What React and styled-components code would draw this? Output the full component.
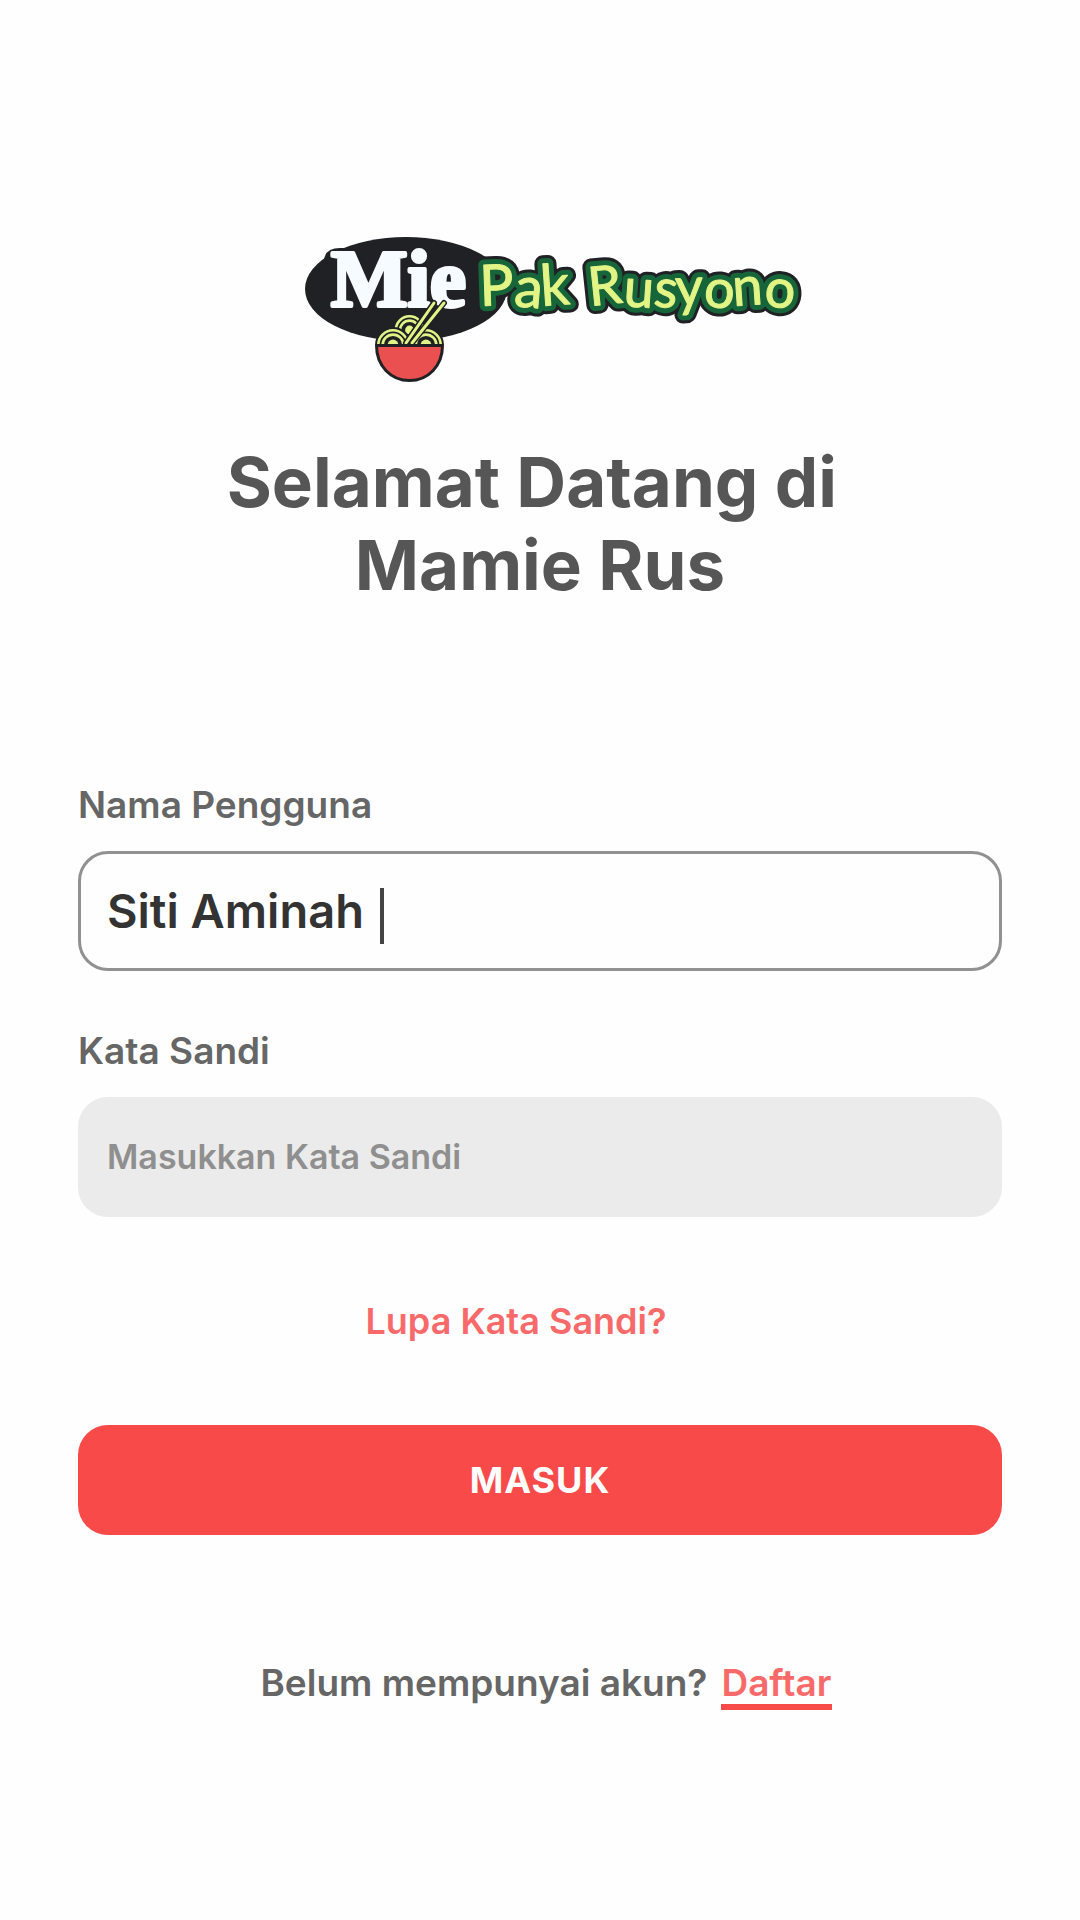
import React from "react";
import styled, { createGlobalStyle } from "styled-components";

const GlobalStyle = createGlobalStyle`
  *, *::before, *::after { box-sizing: border-box; }
  body {
    margin: 0;
    background: #fefefe;
    font-family: Inter, "Open Sans", sans-serif;
  }
`;

const Page = styled.main`
  display: flex;
  flex-direction: column;
  align-items: stretch;
  min-height: 100vh;
  padding: 237px 78px 120px;
`;

const LogoArt = styled.svg`
  display: block;
  align-self: center;
  width: 508px;
  max-width: 100%;
  overflow: visible;
`;

const Title = styled.h1`
  margin: 58px 0 0;
  color: #565656;
  font-size: 69px;
  font-weight: 700;
  line-height: 83px;
  text-align: center;
`;

const Form = styled.form`
  display: flex;
  flex-direction: column;
  margin-top: 178px;
`;

const Field = styled.div`
  display: flex;
  flex-direction: column;
  gap: 26px;
  & + & { margin-top: 60px; }
`;

const Label = styled.label`
  color: #666;
  font-size: 37px;
  font-weight: 600;
  line-height: 40px;
`;

const InputBox = styled.div`
  display: flex;
  align-items: center;
  gap: 16px;
  height: 120px;
  padding: 0 26px;
  border: 3px solid ${(p) => (p.$active ? "#919191" : "#ebebeb")};
  border-radius: 30px;
  background: ${(p) => (p.$active ? "#fefefe" : "#ebebeb")};
`;

const Input = styled.input`
  ${(p) => (p.$hug ? "field-sizing: content; max-width: 100%;" : "flex: 1;")}
  min-width: 0;
  padding: 0;
  border: 0;
  outline: 0;
  background: transparent;
  color: #333;
  caret-color: transparent;
  font-family: Inter, "Open Sans", sans-serif;
  font-size: ${(p) => (p.$hug ? 47 : 34)}px;
  font-weight: 600;
  line-height: 56px;
  &::placeholder {
    color: #8f8f8f;
    opacity: 1;
  }
`;

const Caret = styled.span`
  flex: none;
  width: 4px;
  height: 56px;
  margin-top: 10px;
  background: #444;
`;

const ForgotRow = styled.div`
  display: flex;
  justify-content: center;
  margin: 84px 0;
  padding-right: 48px;
`;

const TextLink = styled.a`
  color: #f86a6a;
  font-size: 36px;
  font-weight: 600;
  line-height: 40px;
  text-decoration: none;
`;

const SignUpLink = styled(TextLink)`
  padding-bottom: 1px;
  border-bottom: 6px solid #f94a4a;
  font-size: 37px;
`;

const SubmitButton = styled.button`
  height: 110px;
  border: 0;
  border-radius: 30px;
  background: #f94a4a;
  color: #fff;
  font: 700 36px/44px Inter, "Open Sans", sans-serif;
  letter-spacing: 1px;
  cursor: pointer;
`;

const SignUp = styled.p`
  display: flex;
  flex-wrap: wrap;
  justify-content: center;
  gap: 14px;
  margin: 128px 0 0;
  padding-left: 12px;
  color: #666;
  font-size: 37px;
  font-weight: 600;
  line-height: 40px;
`;

const INK = "#202125";
const NOODLE = "#e3f486";

function Noodles({ x, y, r }) {
  return (
    <g fill={INK}>
      <circle cx={x} cy={y} r={r + 2} />
      <g fill="none" stroke={NOODLE} strokeWidth="2.6">
        <circle cx={x} cy={y} r={r - 1.3} />
        <circle cx={x} cy={y} r={r - 5.6} />
      </g>
      <circle cx={x} cy={y} r={r - 10.6} fill={NOODLE} />
    </g>
  );
}

const LETTERING_LAYERS = [
  { stroke: INK, strokeWidth: 17 },
  { stroke: "#17663a", strokeWidth: 11 },
  { stroke: NOODLE, strokeWidth: 1 },
];

function Logo() {
  return (
    <LogoArt viewBox="286 237 508 146" role="img" aria-label="Mie Pak Rusyono">
      <defs>
        <clipPath id="above-rim">
          <rect x="370" y="300" width="80" height="45" />
        </clipPath>
      </defs>
      <ellipse cx="406" cy="289" rx="101" ry="52" fill={INK} />
      <path d="M324 266 Q322 248 340 248 H360 V270 Z" fill={INK} />
      {LETTERING_LAYERS.map((layer) => (
        <g
          key={layer.stroke}
          fill={NOODLE}
          strokeLinejoin="round"
          fontFamily="Lato, sans-serif"
          fontWeight="400"
          {...layer}
        >
          <text x="480" y="306" fontSize="57" rotate="-2 5 -4">Pak</text>
          <text x="590" y="306" fontSize="54" rotate="-6 4 6 -2 6 -4 5">Rusyono</text>
        </g>
      ))}
      <text
        x="331"
        y="306"
        fill="#f5fbff"
        stroke="#f5fbff"
        strokeWidth="4"
        strokeLinejoin="round"
        fontFamily="'Liberation Serif', serif"
        fontSize="81"
        fontWeight="700"
      >
        Mie
      </text>
      <g clipPath="url(#above-rim)">
        <Noodles x={409.5} y={330} r={15} />
        <Noodles x={393} y={345} r={16} />
        <Noodles x={426} y={345} r={16} />
      </g>
      <g strokeLinecap="round">
        <path d="M406 343 L434 303 M412 343 L444 303" stroke={INK} strokeWidth="6" />
        <path d="M406 343 L434 303 M412 343 L444 303" stroke={NOODLE} strokeWidth="3" />
      </g>
      <path
        d="M376.5 345.5 H442.5 C442.5 366 428 380.5 409.5 380.5 S376.5 366 376.5 345.5 Z"
        fill="#ea504f"
        stroke={INK}
        strokeWidth="3"
        strokeLinejoin="round"
      />
    </LogoArt>
  );
}

export default function App() {
  return (
    <>
      <GlobalStyle />
      <Page>
        <Logo />
        <Title>
          Selamat Datang di&nbsp;
          <br />
          Mamie Rus
        </Title>
        <Form onSubmit={(e) => e.preventDefault()}>
          <Field>
            <Label htmlFor="username">Nama Pengguna</Label>
            <InputBox $active>
              <Input id="username" type="text" defaultValue="Siti Aminah" $hug />
              <Caret aria-hidden="true" />
            </InputBox>
          </Field>
          <Field>
            <Label htmlFor="password">Kata Sandi</Label>
            <InputBox>
              <Input id="password" type="password" placeholder="Masukkan Kata Sandi" />
            </InputBox>
          </Field>
          <ForgotRow>
            <TextLink href="#lupa">Lupa Kata Sandi?</TextLink>
          </ForgotRow>
          <SubmitButton type="submit">MASUK</SubmitButton>
        </Form>
        <SignUp>
          Belum mempunyai akun?
          <SignUpLink href="#daftar">Daftar</SignUpLink>
        </SignUp>
      </Page>
    </>
  );
}
